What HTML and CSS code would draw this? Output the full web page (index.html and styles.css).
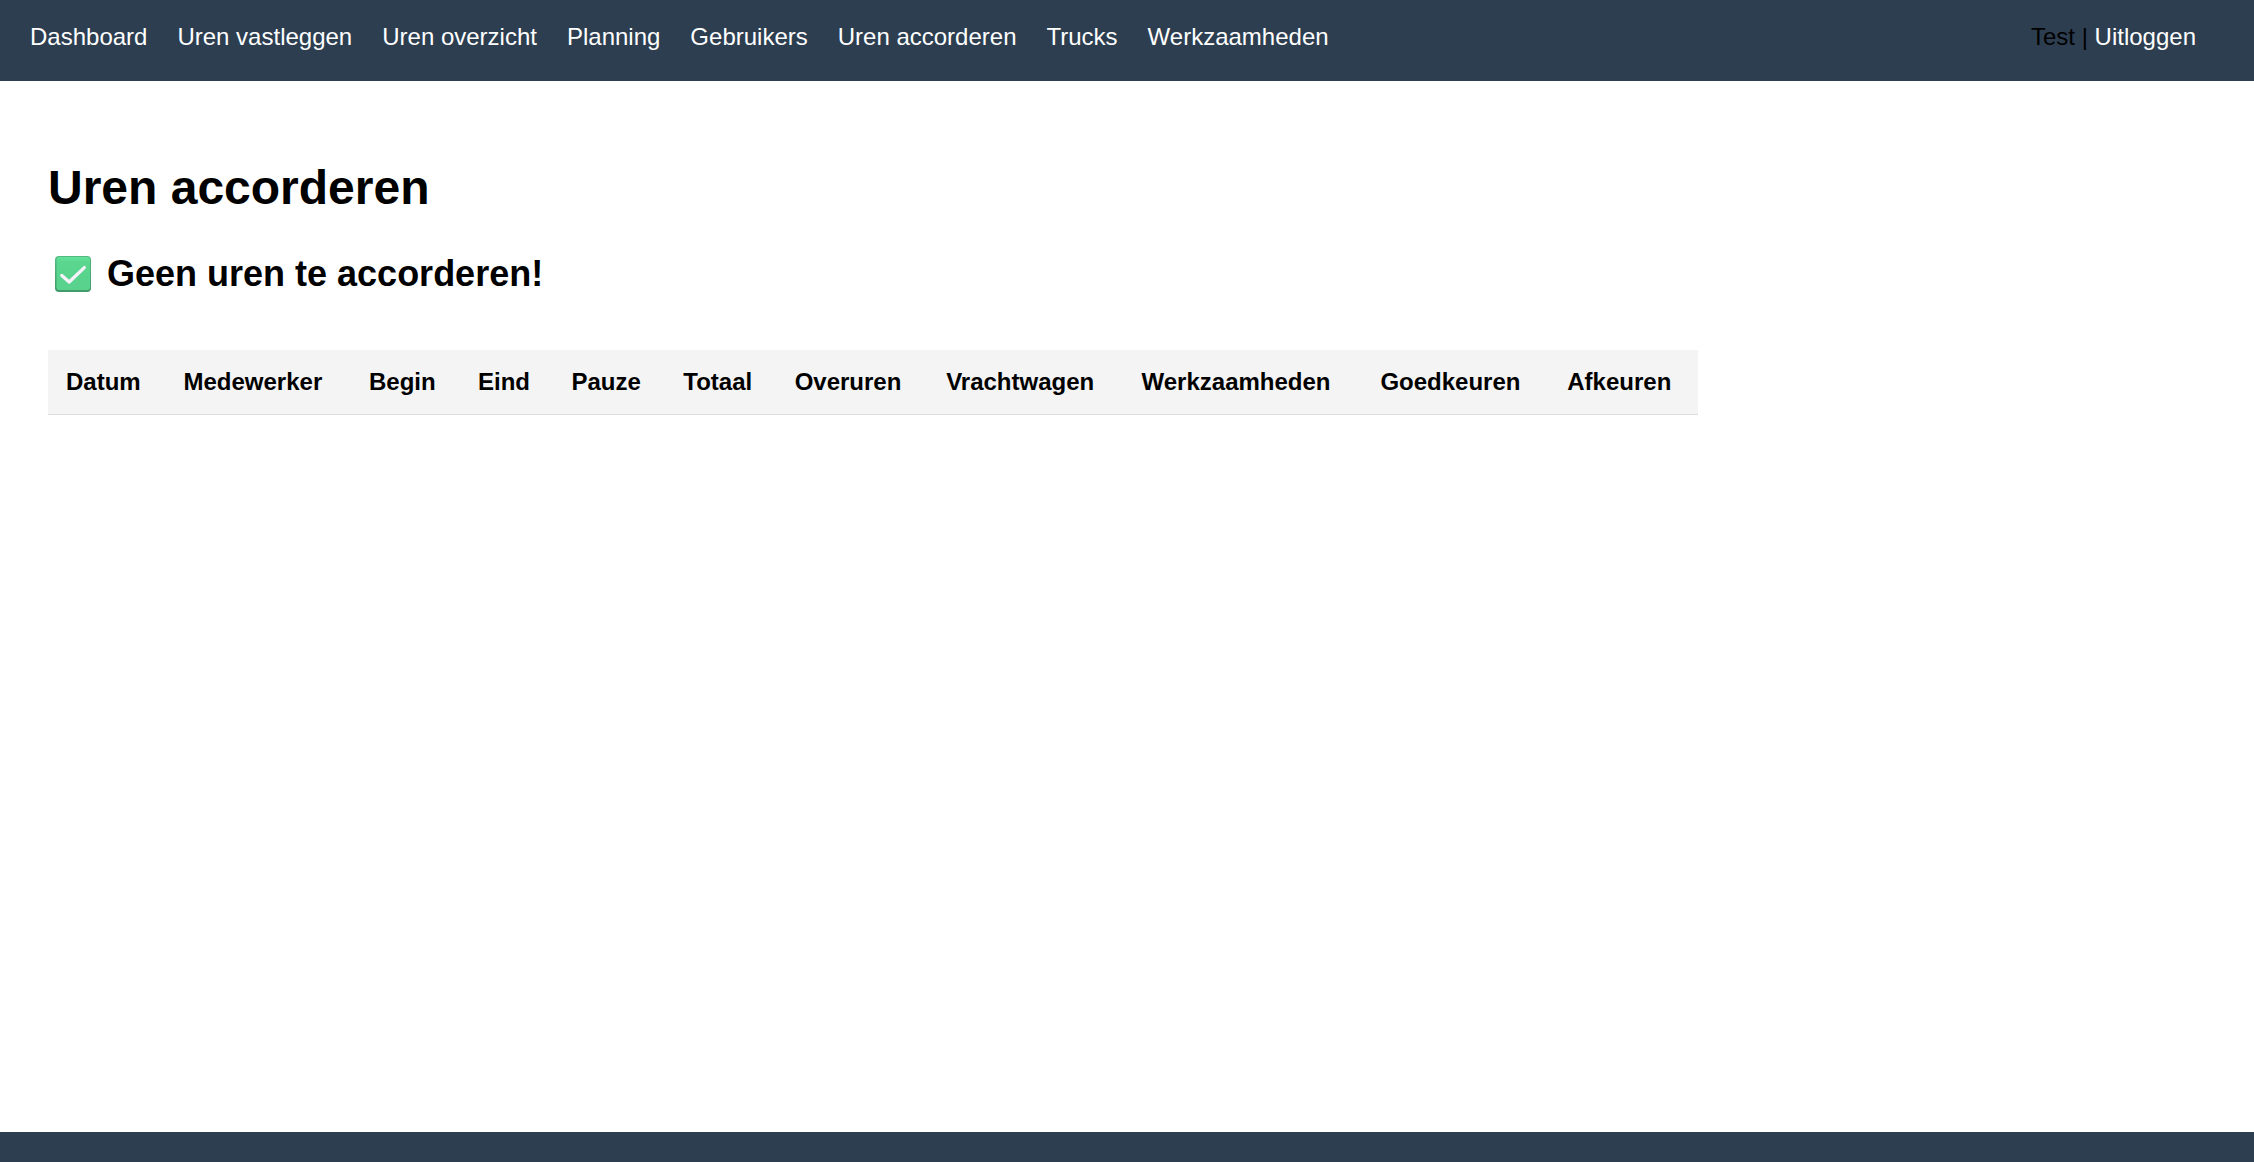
FILE: index.html
```html
<!DOCTYPE html>
<html lang="nl">
<head>
<meta charset="utf-8">
<meta name="viewport" content="width=device-width, initial-scale=1">
<title>Uren accorderen</title>
<link rel="stylesheet" href="styles.css">
</head>
<body>
<header class="topbar">
  <nav class="menu">
    <a href="#">Dashboard</a>
    <a href="#">Uren vastleggen</a>
    <a href="#">Uren overzicht</a>
    <a href="#">Planning</a>
    <a href="#">Gebruikers</a>
    <a href="#">Uren accorderen</a>
    <a href="#">Trucks</a>
    <a href="#">Werkzaamheden</a>
  </nav>
  <div class="account">Test | <a href="#">Uitloggen</a></div>
</header>
<main class="content">
  <h1 class="title">Uren accorderen</h1>
  <h2 class="status">
    <svg class="status-icon" viewBox="0 0 36 36" aria-hidden="true">
      <defs>
        <linearGradient id="face" x1="0" y1="0" x2="0" y2="1">
          <stop offset="0" stop-color="#64e29a"/>
          <stop offset="0.15" stop-color="#5ad68f"/>
          <stop offset="1" stop-color="#58d28c"/>
        </linearGradient>
        <linearGradient id="edge" x1="0" y1="0" x2="0" y2="1">
          <stop offset="0" stop-color="#52b981"/>
          <stop offset="1" stop-color="#43996a"/>
        </linearGradient>
      </defs>
      <rect width="36" height="36" rx="4" fill="url(#edge)"/>
      <rect x="1.500" y="1" width="33.500" height="33" rx="3" fill="url(#face)"/>
      <path d="M6.800 19.400L14.200 26L29.300 11.600" fill="none" stroke="#f8f2fb" stroke-width="3.300" stroke-linecap="round" stroke-linejoin="round"/>
    </svg>
    Geen uren te accorderen!
  </h2>
  <table class="hours">
    <thead>
      <tr>
        <th scope="col">Datum</th>
        <th scope="col">Medewerker</th>
        <th scope="col">Begin</th>
        <th scope="col">Eind</th>
        <th scope="col">Pauze</th>
        <th scope="col">Totaal</th>
        <th scope="col">Overuren</th>
        <th scope="col">Vrachtwagen</th>
        <th scope="col">Werkzaamheden</th>
        <th scope="col">Goedkeuren</th>
        <th scope="col">Afkeuren</th>
      </tr>
    </thead>
    <tbody></tbody>
  </table>
</main>
<footer class="bottombar"></footer>
</body>
</html>
```
FILE: styles.css
```css
body {
  margin: 0;
  min-height: 100vh;
  display: flex;
  flex-direction: column;
  font-family: "Liberation Sans", Arial, sans-serif;
  font-size: 24px;
  line-height: 28px;
  color: #000;
  background: #fff;
}

.topbar {
  display: flex;
  justify-content: space-between;
  padding: 23px 58px 30px 30px;
  background: #2c3e50;
}

.topbar a {
  color: #fff;
  text-decoration: none;
}

.menu {
  display: flex;
  gap: 30px;
}

.content {
  flex: 1;
  padding: 79px 48px;
}

.title {
  margin: 0 0 37px;
  font-size: 48px;
  line-height: 56px;
}

.status {
  display: flex;
  align-items: center;
  gap: 16px;
  margin: 0 0 55px;
  padding-left: 7px;
  font-size: 36px;
  line-height: 42px;
}

.status-icon {
  width: 36px;
  height: 36px;
}

.hours {
  width: 100%;
  max-width: 1650px;
  border-collapse: collapse;
  text-align: left;
}

.hours th {
  padding: 18px;
  background: #f4f4f4;
  border-bottom: 1px solid #ddd;
}

.bottombar {
  height: 30px;
  background: #2c3e50;
}
```
